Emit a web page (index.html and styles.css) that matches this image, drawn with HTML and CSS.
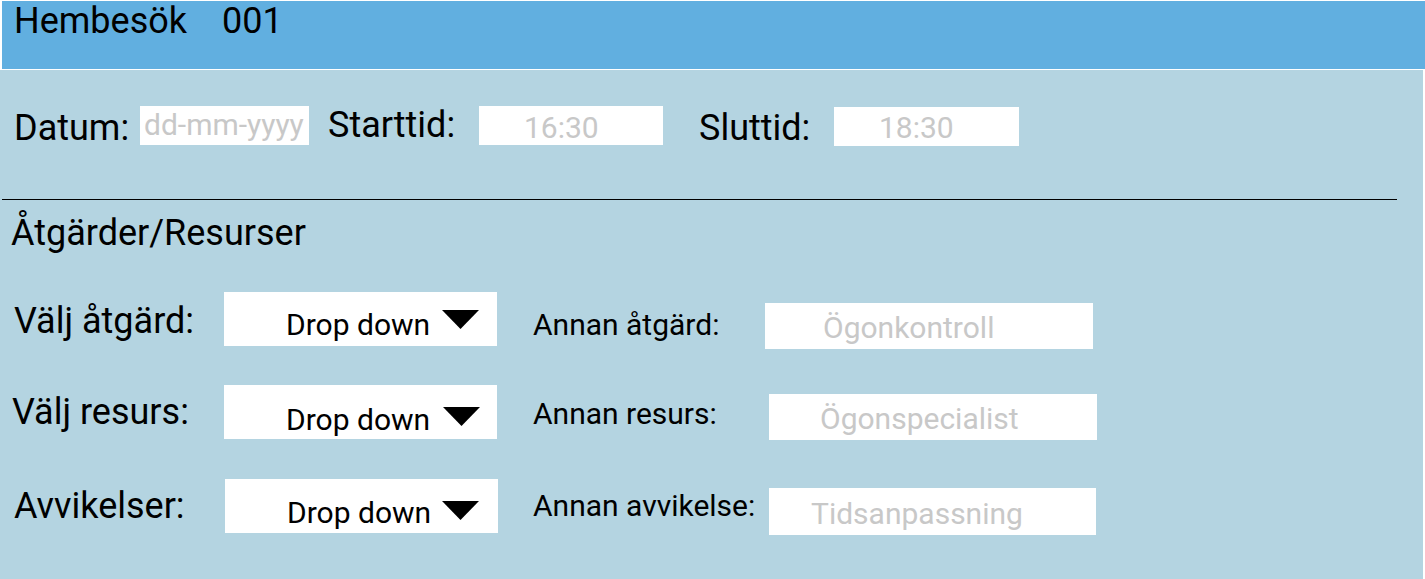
FILE: index.html
```html
<!DOCTYPE html>
<html lang="sv">
<head>
<meta charset="utf-8">
<title>Hembesök 001</title>
<link rel="stylesheet" href="styles.css">
</head>
<body>
<header class="topbar">
  <span class="title">Hembesök</span><span class="visit-no">001</span>
</header>
<main class="panel">
  <div class="time-row">
    <span class="lbl lbl-datum">Datum:</span>
    <div class="field field-date">dd-mm-yyyy</div>
    <span class="lbl lbl-start">Starttid:</span>
    <div class="field field-start">16:30</div>
    <span class="lbl lbl-end">Sluttid:</span>
    <div class="field field-end">18:30</div>
  </div>
  <div class="divider"></div>
  <h2 class="section-title">Åtgärder/Resurser</h2>

  <div class="action-row row-1">
    <span class="row-label">Välj åtgärd:</span>
    <div class="dropdown"><span class="dd-text">Drop down</span><svg class="dd-arrow" width="37" height="19" viewBox="0 0 37 19"><polygon points="0,0 37,0 18.5,19" fill="#000"/></svg></div>
    <span class="alt-label">Annan åtgärd:</span>
    <div class="alt-field">Ögonkontroll</div>
  </div>

  <div class="action-row row-2">
    <span class="row-label">Välj resurs:</span>
    <div class="dropdown"><span class="dd-text">Drop down</span><svg class="dd-arrow" width="37" height="19" viewBox="0 0 37 19"><polygon points="0,0 37,0 18.5,19" fill="#000"/></svg></div>
    <span class="alt-label">Annan resurs:</span>
    <div class="alt-field">Ögonspecialist</div>
  </div>

  <div class="action-row row-3">
    <span class="row-label">Avvikelser:</span>
    <div class="dropdown"><span class="dd-text">Drop down</span><svg class="dd-arrow" width="37" height="19" viewBox="0 0 37 19"><polygon points="0,0 37,0 18.5,19" fill="#000"/></svg></div>
    <span class="alt-label">Annan avvikelse:</span>
    <div class="alt-field">Tidsanpassning</div>
  </div>
</main>
</body>
</html>
```
FILE: styles.css
```css
* { box-sizing: border-box; }

body {
  margin: 0;
  background: #ffffff;
  font-family: Roboto, "Noto Sans", "Liberation Sans", sans-serif;
  color: #000000;
  overflow: hidden;
}

.topbar {
  display: flex;
  margin: 1px 0 0 2px;
  height: 68px;
  background: #61afe0;
  padding: 2px 0 0 12px;
  font-size: 36px;
  line-height: 36px;
}

.visit-no { margin-left: 35px; }

.panel {
  margin-top: 1px;
  width: 1423px;
  height: 509px;
  background: #b4d4e1;
  padding-top: 36px;
}

/* time row */
.time-row {
  display: flex;
  align-items: flex-start;
  height: 40px;
  padding-left: 14px;
}

.lbl {
  flex: none;
  font-size: 36px;
  line-height: 36px;
  white-space: nowrap;
}

.lbl-datum { width: 126px; margin-top: 4px; }
.lbl-start { width: 151px; margin-left: 19px; margin-top: 1px; }
.lbl-end { width: 135px; margin-left: 36px; margin-top: 4px; }

.field {
  flex: none;
  height: 39px;
  background: #ffffff;
  color: #c8c8c8;
  font-size: 30px;
  line-height: 30px;
  white-space: nowrap;
}

.field-date { width: 169px; padding: 4px 0 0 4px; }
.field-start { width: 184px; padding: 7px 0 0 45px; }
.field-end { width: 185px; margin-top: 1px; padding: 6px 0 0 45px; }

.divider {
  width: 1395px;
  height: 1px;
  margin: 53px 0 0 2px;
  background: #000000;
}

.section-title {
  margin: 15px 0 0 11px;
  font-size: 36px;
  line-height: 36px;
  font-weight: 400;
}

/* action rows */
.action-row {
  display: flex;
  align-items: flex-start;
}

.row-label {
  flex: none;
  font-size: 36px;
  line-height: 36px;
  margin-top: 9px;
  white-space: nowrap;
}

.dropdown {
  flex: none;
  display: flex;
  align-items: flex-start;
  width: 273px;
  height: 54px;
  background: #ffffff;
  font-size: 30px;
  line-height: 30px;
  padding-left: 62px;
}

.dd-text { white-space: nowrap; }

.dd-arrow {
  flex: none;
  margin-left: auto;
  display: block;
}

.alt-label {
  flex: none;
  font-size: 30px;
  line-height: 30px;
  white-space: nowrap;
}

.alt-field {
  flex: none;
  background: #ffffff;
  color: #c8c8c8;
  font-size: 30px;
  line-height: 30px;
  height: 46px;
  margin-top: 9px;
  white-space: nowrap;
}

/* row 1 */
.row-1 { margin-top: 41px; padding-left: 14px; }
.row-1 .row-label { width: 210px; margin-top: 11px; }
.row-1 .dropdown { padding-top: 18px; padding-right: 18px; }
.row-1 .alt-label { width: 232px; margin-left: 36px; margin-top: 18px; }
.row-1 .alt-field { width: 328px; margin-top: 11px; padding: 10px 0 0 58px; }

/* row 2 */
.row-2 { margin-top: 36px; padding-left: 12px; }
.row-2 .row-label { width: 212px; }
.row-2 .dropdown { padding-top: 20px; padding-right: 17px; }
.row-2 .dd-arrow { margin-top: 2px; }
.row-2 .alt-label { width: 236px; margin-left: 36px; margin-top: 14px; }
.row-2 .alt-field { width: 328px; padding: 10px 0 0 51px; }

/* row 3 */
.row-3 { margin-top: 39px; padding-left: 14px; }
.row-3 .row-label { width: 211px; }
.row-3 .dropdown { padding-top: 19px; padding-right: 19px; }
.row-3 .dd-arrow { margin-top: 3px; }
.row-3 .alt-label { width: 236px; margin-left: 35px; margin-top: 12px; }
.row-3 .alt-field { width: 327px; height: 47px; padding: 11px 0 0 42px; }
```
